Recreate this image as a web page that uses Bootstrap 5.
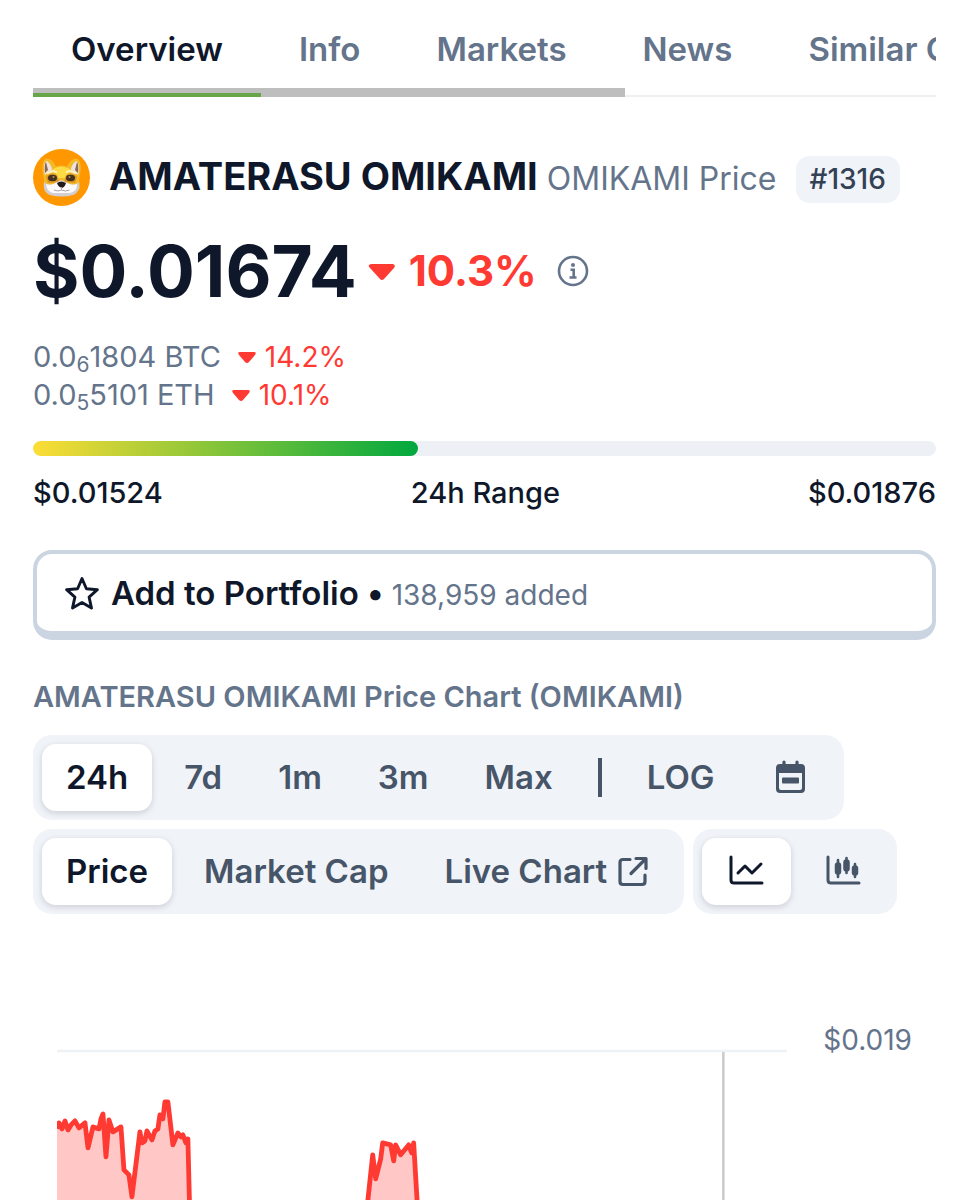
<!DOCTYPE html>
<html lang="en">
<head>
<meta charset="utf-8">
<meta name="viewport" content="width=device-width, initial-scale=1">
<title>AMATERASU OMIKAMI Price</title>
<link rel="stylesheet" href="https://cdn.jsdelivr.net/npm/bootstrap@5.3.0/dist/css/bootstrap.min.css">
<style>
  :root { --ink: #0f172a; --slate: #64748b; --slate-dark: #475569; --mist: #f0f3f8; --down: #ff3a33; }
  body { font-family: Inter, "Liberation Sans", sans-serif; font-size: 28px; line-height: 38px; color: var(--ink); background: #fff; }
  .page-shell { padding: 0 33px; }
  svg { display: block; flex: none; }
  .fs-control { font-size: 33px; }
  .text-slate { color: var(--slate); }
  .text-down { color: var(--down); }

  .tab-strip { height: 97px; border-bottom: 2px solid #eff0f2; }
  .tab-strip .nav-link { padding: 29px 38px 24px; height: 97px; line-height: 40px; font-weight: 600; color: var(--slate); white-space: nowrap; border-bottom: 4px solid transparent; border-radius: 0; position: relative; z-index: 1; }
  .tab-strip .nav-link.active { color: var(--ink); border-color: #67a548; }
  .scroll-thumb { left: 0; top: 88px; width: 592px; height: 9px; background: #bebebe; }

  .coin-head { margin-top: 52px; min-height: 57px; }
  .coin-name { margin-left: 19px; font-size: 38px; line-height: 48px; font-weight: 700; }
  .coin-symbol { margin-left: 9px; font-size: 32px; font-weight: 400; }
  .rank { margin: 4px 0 0 19px; padding: 5px 14px; height: 47px; line-height: 37px; font-weight: 500; color: #334155; background: var(--mist); border-radius: 14px; }
  .price-row { margin-top: 22px; height: 86px; }
  .price-now { font-size: 71px; line-height: 86px; font-weight: 700; }
  .price-change { margin-left: 10px; font-size: 42px; font-weight: 700; }
  .info-btn { margin-left: 20px; }
  .pairs { margin-top: 24px; }
  .pair-value { font-size: 29px; }
  .pairs sub { font-size: 21px; line-height: 0; bottom: -5px; }

  .range-bar { margin-top: 27px; height: 15px; border-radius: 8px; background: #edf0f4; }
  .range-bar .progress-bar { border-radius: 8px; background: linear-gradient(90deg, #fddd35, #00a83e); }
  .range-text { margin-top: 18px; font-size: 29px; font-weight: 500; }

  .portfolio-btn { margin-top: 38px; padding: 18px 28px 14px; border: 4px solid #cbd5e1; border-bottom-width: 9px; border-radius: 19px; background: #fff; color: var(--ink); line-height: 43px; }
  .chart-title { margin: 38px 0 0; font-size: 29px; line-height: 38px; font-weight: 600; color: var(--slate); }

  .pill-group { padding: 9px; gap: 8px; height: 85px; border-radius: 19px; background: var(--mist); }
  .pill { height: 67px; padding: 0 24px 2px; border: 0; border-radius: 14px; background: transparent; font-size: 33px; font-weight: 600; color: var(--slate-dark); white-space: nowrap; }
  .pill.active { background: #fff; color: var(--ink); box-shadow: 0 2px 6px rgba(15, 23, 42, .16); }
  .controls { margin-top: 19px; gap: 9px; }
  .divider { width: 4px; height: 39px; margin: 0 13px; background: var(--slate-dark); }

  .chart-area { margin-top: 107px; padding: 0 24px; flex: 1 1 0; min-height: 0; gap: 36px; }
  .axis-label { line-height: 38px; }
  .plot { min-width: 0; margin-top: 9px; }
</style>
</head>
<body>
<div class="page-shell vh-100 overflow-hidden d-flex flex-column">
  <div class="position-relative overflow-hidden flex-shrink-0">
    <nav class="nav tab-strip flex-nowrap fs-control" aria-label="Coin sections">
      <a class="nav-link active" href="#overview" aria-current="page">Overview</a>
      <a class="nav-link" href="#info">Info</a>
      <a class="nav-link" href="#markets">Markets</a>
      <a class="nav-link" href="#news">News</a>
      <a class="nav-link" href="#similar">Similar Coins</a>
    </nav>
    <div class="scroll-thumb position-absolute"></div>
  </div>

  <header class="coin-head d-flex align-items-center flex-shrink-0">
    <svg width="57" height="57" viewBox="0 0 57 57" aria-hidden="true">
      <circle cx="28.500" cy="28.500" r="28.500" fill="#ff9800"/>
      <path d="M11 30C8 19 9 10 14 9.500q5 0 9 8 5-2 11 0 4-8 9-8c5 .5 6 9.500 3 20.500l1 10-18 5-18-5Z" fill="#f4b926"/>
      <path d="M12 26c-2-7-1-13 2-14 4 3 5 7 5 9ZM45 26c2-7 1-13-2-14-4 3-5 7-5 9Z" fill="#efe3df"/>
      <path d="M12 24q-1-8 1-11l2 8ZM45 24q1-8-1-11l-2 8Z" fill="#8a6a52"/>
      <path d="M20 20q8-5 17 0l-5 9h-7Z" fill="#ffdc45"/>
      <path d="M13 28q4-6 11-2l2 7-11 1ZM44 28q-4-6-11-2l-2 7 11 1Z" fill="#d99726"/>
      <path d="M11 33q4 4 9 2l8-4 9 4q5 2 9-2c1 7-1 11-6 13q-11 3-23 0c-5-2-7-6-6-13Z" fill="#d3ced2"/>
      <path d="M13 35q5 2 10-1l5-2 6 2q5 3 10 1c0 6-3 8-7 9H20q-6-1-7-9Z" fill="#fcfafa"/>
      <ellipse cx="19.500" cy="29" rx="4.500" ry="3.200" fill="#45311f"/><ellipse cx="37.500" cy="29" rx="4.500" ry="3.200" fill="#45311f"/>
      <circle cx="20.500" cy="28" r="1" fill="#c48b58"/><circle cx="36.500" cy="28" r="1" fill="#c48b58"/>
      <path d="M15 24l5-2 3 1M42 24l-5-2-3 1" fill="none" stroke="#fff1ba" stroke-width="2.200" stroke-linecap="round"/>
      <path d="M24 34q4-3 9 0-1 4-4 5-4-1-5-5Z" fill="#201a1d"/>
      <path d="M28.500 38v3M21 41q4 2 7.500 0 4 2 8 0" fill="none" stroke="#aaa2a8" stroke-width="1"/>
    </svg>
    <h1 class="d-flex align-items-baseline mb-0 text-nowrap coin-name">AMATERASU OMIKAMI<span class="coin-symbol text-slate">OMIKAMI Price</span></h1>
    <span class="rank">#1316</span>
  </header>

  <div class="price-row d-flex align-items-center flex-shrink-0">
    <span class="price-now">$0.01674</span>
    <span class="price-change text-down d-flex align-items-center gap-2"><svg width="30" height="20" viewBox="0 0 30 20" aria-hidden="true"><path d="M4 3h22q3 1 1 4L17 18q-2 2-4 0L3 7Q0 4 4 3Z" fill="currentColor"/></svg><span class="ms-1">10.3%</span></span>
    <button class="info-btn btn p-0 border-0 text-slate" type="button" aria-label="Price information"><svg width="32" height="32" viewBox="0 0 32 32"><circle cx="16" cy="16" r="14" fill="none" stroke="currentColor" stroke-width="2.600"/><circle cx="16" cy="10" r="2" fill="currentColor"/><path d="M13.500 14.800h3.200v7.700M12.500 22.500h7" fill="none" stroke="currentColor" stroke-width="2.600"/></svg></button>
  </div>

  <div class="pairs text-slate flex-shrink-0">
    <div class="d-flex align-items-center"><span class="pair-value">0.0<sub>6</sub>1804 BTC</span><svg class="text-down ms-3" width="20" height="14" viewBox="0 0 20 14" aria-hidden="true"><path d="M3 2h14q3 0 1 3l-6 7q-2 2-4 0L2 5Q0 2 3 2Z" fill="currentColor"/></svg><span class="text-down ms-2">14.2%</span></div>
    <div class="d-flex align-items-center"><span class="pair-value">0.0<sub>5</sub>5101 ETH</span><svg class="text-down ms-3" width="20" height="14" viewBox="0 0 20 14" aria-hidden="true"><path d="M3 2h14q3 0 1 3l-6 7q-2 2-4 0L2 5Q0 2 3 2Z" fill="currentColor"/></svg><span class="text-down ms-2">10.1%</span></div>
  </div>

  <div class="progress range-bar flex-shrink-0" role="progressbar" aria-label="24h range" aria-valuenow="43" aria-valuemin="0" aria-valuemax="100"><div class="progress-bar" style="width:42.600%"></div></div>
  <div class="range-text d-flex justify-content-between flex-shrink-0"><span>$0.01524</span><span>24h Range</span><span>$0.01876</span></div>

  <button class="portfolio-btn w-100 d-flex align-items-center text-start flex-shrink-0" type="button">
    <svg width="34" height="38" viewBox="0 0 34 38" aria-hidden="true"><path d="M17 2.500l4.400 10.200 11 1-8.300 7.400 2.400 11L17 26.600 7.500 32.100l2.400-11-8.300-7.400 11-1Z" fill="none" stroke="currentColor" stroke-width="2.900" stroke-linejoin="round"/></svg>
    <span class="d-flex align-items-baseline ms-2 ps-1"><span class="fs-control fw-semibold">Add to Portfolio •</span><span class="ms-2 text-slate">138,959 added</span></span>
  </button>

  <h2 class="chart-title flex-shrink-0">AMATERASU OMIKAMI Price Chart (OMIKAMI)</h2>

  <div class="controls d-flex flex-wrap flex-shrink-0">
    <div class="pill-group d-flex align-items-center" role="group" aria-label="Time range">
      <button class="pill active" type="button">24h</button>
      <button class="pill" type="button">7d</button>
      <button class="pill" type="button">1m</button>
      <button class="pill" type="button">3m</button>
      <button class="pill" type="button">Max</button>
      <span class="divider"></span>
      <button class="pill" type="button">LOG</button>
      <button class="pill" type="button" aria-label="Pick dates"><svg width="40" height="36" viewBox="0 0 40 36"><path d="M9 5h21q4 0 4 4v21q0 4-4 4H9q-4 0-4-4V9q0-4 4-4Zm-1 9v15q0 2 2 2h19q2 0 2-2V14Z" fill="currentColor" fill-rule="evenodd"/><path d="M13 3v5M26 3v5" stroke="currentColor" stroke-width="3.200" stroke-linecap="round"/><rect x="11" y="18.500" width="17" height="6" rx="1" fill="currentColor"/></svg></button>
    </div>
    <div class="pill-group d-flex" role="group" aria-label="Data series">
      <button class="pill active" type="button">Price</button>
      <button class="pill" type="button">Market Cap</button>
      <button class="pill d-flex align-items-center" type="button">Live Chart<svg class="ms-2" width="36" height="34" viewBox="0 0 36 34" aria-hidden="true"><path d="M15 5.500H8q-3 0-3 3v19q0 3 3 3h19q3 0 3-3V21M21 4.500h10v10M30.500 5 16 19.500" fill="none" stroke="currentColor" stroke-width="3.200" stroke-linecap="round" stroke-linejoin="round"/></svg></button>
    </div>
    <div class="pill-group d-flex" role="group" aria-label="Chart style">
      <button class="pill active" type="button" aria-label="Line chart"><svg width="41" height="36" viewBox="0 0 41 36"><path d="M5 4v23q0 3 3 3h28M12 20l7-7 7 7 9-9" fill="none" stroke="currentColor" stroke-width="3" stroke-linecap="round" stroke-linejoin="round"/></svg></button>
      <button class="pill" type="button" aria-label="Candlestick chart"><svg width="41" height="36" viewBox="0 0 41 36"><path d="M5 4v23q0 3 3 3h28" fill="none" stroke="currentColor" stroke-width="3" stroke-linecap="round"/><path d="M15 7v17M23.500 5v15M32 11v13" stroke="currentColor" stroke-width="2.600" stroke-linecap="round"/><path d="M15 12.500v6M23.500 9.500v6M32 15.500v4" stroke="currentColor" stroke-width="6.500" stroke-linecap="round"/></svg></button>
    </div>
  </div>

  <div class="chart-area d-flex align-items-start">
    <svg class="plot flex-fill" viewBox="0 0 731 260" role="img" aria-label="24 hour price chart">
      <path d="M0 21h731" stroke="#eff2f5" stroke-width="2.500"/>
      <path d="M667 22v238" stroke="#cacaca" stroke-width="2.500"/>
      <path d="M0 97 2 93 5 99 8 91 11 100 14 95 18 91 22 98 28 93 31 118 36 97 42 99 44 89 46 84 49 127 52 90 56 102 64 97 67 140 72 145 75 167 83 102 85 113 88 111 90 101 95 110 98 101 101 99 103 85 106 89 108 72 111 72 116 115 121 103 124 107 126 105 129 113 131 109 134 230H307L311 172 316 125 319 149 324 129 326 113 334 115 337 131 339 115 344 125 352 115 355 123 357 113 364 230V260H0Z" fill="#ffc8c7"/>
      <path d="M2 97 2 93 5 99 8 91 11 100 14 95 18 91 22 98 28 93 31 118 36 97 42 99 44 89 46 84 49 127 52 90 56 102 64 97 67 140 72 145 75 167 83 102 85 113 88 111 90 101 95 110 98 101 101 99 103 85 106 89 108 72 111 72 116 115 121 103 124 107 126 105 129 113 131 109 134 230H307L311 172 316 125 319 149 324 129 326 113 334 115 337 131 339 115 344 125 352 115 355 123 357 113 364 230" fill="none" stroke="#ff3a33" stroke-width="4.800" stroke-linecap="round" stroke-linejoin="round"/>
    </svg>
    <span class="axis-label text-slate">$0.019</span>
  </div>
</div>
<script src="https://cdn.jsdelivr.net/npm/bootstrap@5.3.0/dist/js/bootstrap.bundle.min.js"></script>
</body>
</html>
